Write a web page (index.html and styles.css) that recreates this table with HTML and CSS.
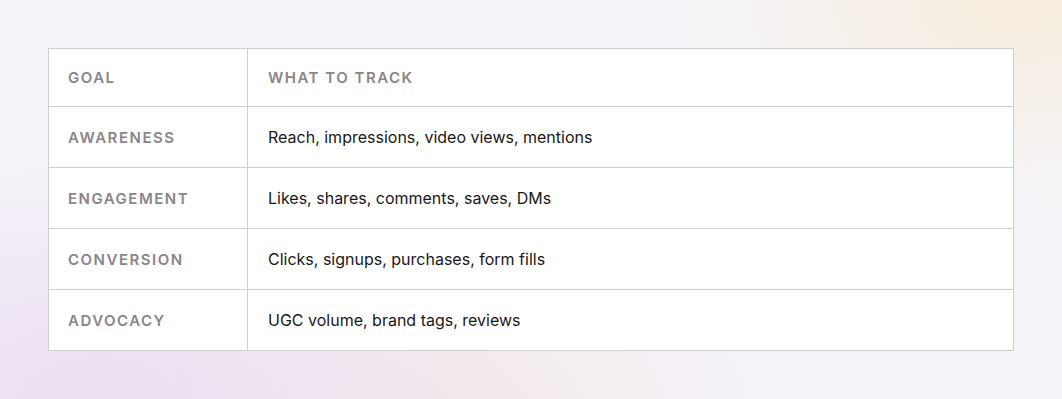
FILE: index.html
```html
<!DOCTYPE html>
<html lang="en">
<head>
  <meta charset="UTF-8">
  <title>Goals and metrics</title>
  <meta name="viewport" content="width=device-width, initial-scale=1.0">
  <link rel="stylesheet" href="styles.css">
</head>

<body>

  <div class="page">
    <table class="metrics">
      <colgroup>
        <col class="goal-col">
        <col>
      </colgroup>
      <thead>
        <tr>
          <th>Goal</th>
          <th>What to track</th>
        </tr>
      </thead>
      <tbody>
        <tr>
          <td class="goal">Awareness</td>
          <td>Reach, impressions, video views, mentions</td>
        </tr>
        <tr>
          <td class="goal">Engagement</td>
          <td>Likes, shares, comments, saves, DMs</td>
        </tr>
        <tr>
          <td class="goal">Conversion</td>
          <td>Clicks, signups, purchases, form fills</td>
        </tr>
        <tr>
          <td class="goal">Advocacy</td>
          <td>UGC volume, brand tags, reviews</td>
        </tr>
      </tbody>
    </table>
  </div>

</body>
</html>
```

FILE: styles.css
```css
html, body {
  margin: 0;
  padding: 0;
  height: 100%;
  font-family: Inter, 'Noto Sans', sans-serif;
  overflow: hidden;
}

body {
  background-color: #f5f4f9;
  background-image:
    radial-gradient(ellipse 420px 260px at 8% 100%, rgba(236, 220, 242, 0.9), transparent),
    radial-gradient(ellipse 380px 240px at 40% 105%, rgba(242, 228, 232, 0.8), transparent),
    radial-gradient(ellipse 360px 220px at 96% 0%, rgba(247, 236, 220, 0.95), transparent);
}

.page {
  padding: 48px;
}

.metrics {
  width: 100%;
  border-collapse: collapse;
  table-layout: fixed;
  background: #fff;
  border: 1px solid #cfcdd0;
}

.goal-col {
  width: 199px;
}

.metrics th,
.metrics td {
  border: 1px solid #cfcdd0;
  padding: 20px 20px;
  text-align: left;
  vertical-align: middle;
}

.metrics th {
  font-size: 15px;
  line-height: 17px;
  font-weight: 600;
  letter-spacing: 0.1em;
  text-transform: uppercase;
  color: #8b8489;
}

.metrics th:first-child,
.metrics td.goal {
  padding-left: 19px;
}

.metrics td {
  font-size: 16px;
  line-height: 20px;
  color: #18181a;
}

.metrics td.goal {
  padding-top: 21px;
  padding-bottom: 19px;
  font-size: 15px;
  font-weight: 600;
  letter-spacing: 0.1em;
  text-transform: uppercase;
  color: #8b8489;
}
```
